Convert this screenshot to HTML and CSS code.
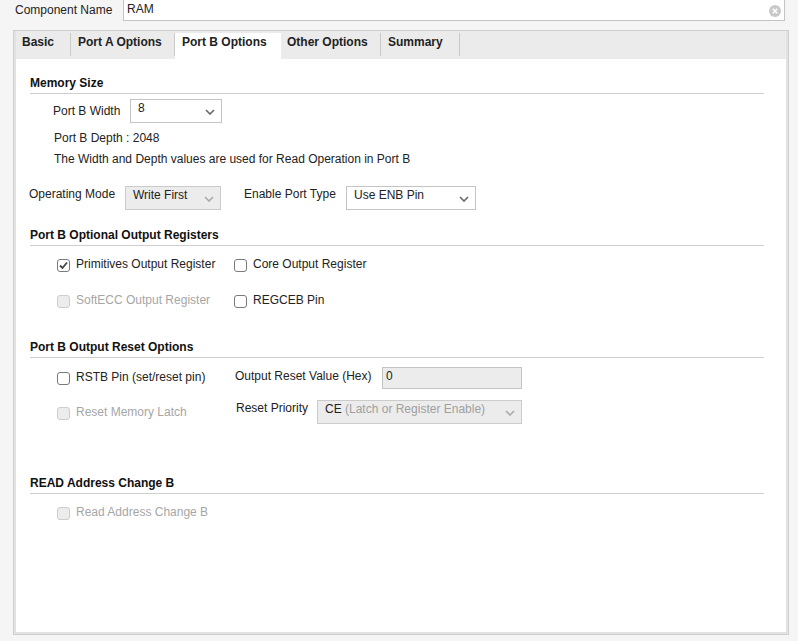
FILE: index.html
```html
<!DOCTYPE html>
<html>
<head>
<meta charset="utf-8">
<link rel="stylesheet" href="styles.css">
</head>
<body>
<div class="top">
  <span class="top-label">Component Name</span>
  <div class="name-input">
    <span>RAM</span>
    <svg class="clear" width="12" height="12" viewBox="0 0 12 12"><circle cx="6" cy="6" r="6" fill="#c9c9c9"/><path d="M3.8 3.8L8.2 8.2M8.2 3.8L3.8 8.2" stroke="#fff" stroke-width="1.6"/></svg>
  </div>
</div>
<div class="panel">
  <div class="tabs">
    <div class="tab t1">Basic</div>
    <div class="tab t2">Port A Options</div>
    <div class="tab t3 active">Port B Options</div>
    <div class="tab t4">Other Options</div>
    <div class="tab t5">Summary</div>
  </div>
  <div class="content">
    <div class="sec-title s1">Memory Size</div>
    <div class="row width-row">
      <span class="lbl">Port B Width</span>
      <div class="select w-width"><span>8</span><svg class="chev" width="10" height="6" viewBox="0 0 10 6"><path d="M1 1L5 5L9 1" fill="none" stroke="#666" stroke-width="1.6"/></svg></div>
    </div>
    <div class="txt depth">Port B Depth : 2048</div>
    <div class="txt desc">The Width and Depth values are used for Read Operation in Port B</div>
    <div class="row op-row">
      <span class="lbl">Operating Mode</span>
      <div class="select disabled w-mode"><span>Write First</span><svg class="chev" width="10" height="6" viewBox="0 0 10 6"><path d="M1 1L5 5L9 1" fill="none" stroke="#aaa" stroke-width="1.6"/></svg></div>
      <span class="lbl lbl-enable">Enable Port Type</span>
      <div class="select w-enable"><span>Use ENB Pin</span><svg class="chev" width="10" height="6" viewBox="0 0 10 6"><path d="M1 1L5 5L9 1" fill="none" stroke="#666" stroke-width="1.6"/></svg></div>
    </div>

    <div class="sec-title s2">Port B Optional Output Registers</div>
    <div class="cgrid g1">
      <label class="chk"><span class="box checked"><svg width="11" height="11" viewBox="0 0 11 11"><path d="M2 5.5L4.5 8L9 2.5" fill="none" stroke="#444" stroke-width="1.8"/></svg></span>Primitives Output Register</label>
      <label class="chk"><span class="box"></span>Core Output Register</label>
      <label class="chk dis r2"><span class="box"></span>SoftECC Output Register</label>
      <label class="chk r2"><span class="box"></span>REGCEB Pin</label>
    </div>

    <div class="sec-title s3">Port B Output Reset Options</div>
    <div class="reset">
      <div class="rrow rr1">
        <label class="chk c1"><span class="box"></span>RSTB Pin (set/reset pin)</label>
        <span class="lbl rv-lbl">Output Reset Value (Hex)</span>
        <div class="field">0</div>
      </div>
      <div class="rrow rr2">
        <label class="chk dis c1 lm"><span class="box"></span>Reset Memory Latch</label>
        <span class="lbl rp-lbl">Reset Priority</span>
        <div class="select disabled w-prio"><span>CE <em>(Latch or Register Enable)</em></span><svg class="chev" width="10" height="6" viewBox="0 0 10 6"><path d="M1 1L5 5L9 1" fill="none" stroke="#aaa" stroke-width="1.6"/></svg></div>
      </div>
    </div>

    <div class="sec-title s4">READ Address Change B</div>
    <label class="chk dis ra"><span class="box"></span>Read Address Change B</label>
  </div>
</div>
</body>
</html>
```
FILE: styles.css
```css
html, body {
  margin: 0;
  padding: 0;
  background: #f5f5f5;
  font-family: "Liberation Sans", Arial, sans-serif;
  font-size: 12px;
  color: #222;
  width: 798px;
  height: 641px;
  overflow: hidden;
}
.top {
  display: flex;
  align-items: center;
  height: 22px;
  padding-left: 15px;
  margin-top: -1px;
}
.top-label {
  width: 108px;
}
.name-input {
  width: 662px;
  height: 22px;
  box-sizing: border-box;
  border: 1px solid #c4c4c4;
  background: #fff;
  display: flex;
  align-items: center;
  justify-content: space-between;
  padding: 0 3px 0 3px;
}
.name-input span { margin-top: -3px; }
.clear { margin-top: 1px; }
.panel {
  margin: 9px 0 0 13px;
  width: 776px;
  height: 605px;
  box-sizing: border-box;
  border: 1px solid #cfcfcf;
  box-shadow: inset 2px 0 0 #e2e2e2, inset -2px 0 0 #e2e2e2, inset 0 -2px 0 #e2e2e2;
  background: #fff;
  display: flex;
  flex-direction: column;
}
.tabs {
  display: flex;
  height: 28px;
  background: #ebebeb;
  margin: 0 2px;
  align-items: flex-end;
  line-height: 14px;
}
.tab {
  font-weight: bold;
  box-sizing: border-box;
}
.t1 { width: 55px; padding-left: 6px; }
.t2 { width: 104px; padding-left: 7px; }
.t3 { width: 106px; padding-left: 7px; background: #fff; height: 26px; padding-top: 2px; }
.t4 { width: 100px; padding-left: 6px; }
.t5 { width: 79px; padding-left: 7px; }
.t1, .t2, .t4, .t5 { border-right: 1px solid #c9c9c9; height: 23px; margin-bottom: 3px; padding-top: 2px; }
.content {
  flex: 1;
  padding: 16px 22px 0 14px;
  margin: 0 2px 2px;
  background: #fff;
  line-height: 14px;
}
.sec-title {
  font-weight: bold;
  color: #111;
  padding-top: 1px;
  padding-bottom: 3px;
  border-bottom: 1px solid #cfcfcf;
}
.row {
  display: flex;
  align-items: flex-start;
}
.lbl { display: inline-block; }
.width-row {
  margin-top: 5px;
  padding-left: 23px;
}
.width-row .lbl { width: 77px; padding-top: 5px; }
.select {
  height: 24px;
  box-sizing: border-box;
  border: 1px solid #c4c4c4;
  background: #fff;
  display: flex;
  justify-content: space-between;
  align-items: flex-start;
  padding: 1px 6px 0 7px;
  color: #222;
}
.select .chev { margin-top: 8px; }
.w-width { width: 92px; }
.txt { margin-top: 7px; padding-left: 24px; }
.depth { padding-top: 1px; margin-top: 7px; }
.desc { margin-top: 6px; padding-top: 1px; }
.op-row { margin-top: 20px; }
.op-row .lbl { padding-top: 1px; }
.op-row .lbl:first-child { width: 96px; margin-left: -1px; }
.op-row .select { height: 24px; }
.disabled { background: #ececec; border-color: #cbcbcb; }
.w-mode { width: 96px; }
.lbl-enable { margin-left: 23px; width: 102px; }
.w-enable { width: 130px; }
.s2 { margin-top: 17px; }
.cgrid {
  display: grid;
  grid-template-columns: 177px auto;
  padding-left: 27px;
  margin-top: 11px;
  row-gap: 22px;
}
.chk {
  display: flex;
  align-items: center;
  height: 14px;
  color: #222;
}
.box {
  width: 13px;
  height: 13px;
  box-sizing: border-box;
  border: 1px solid #7a7a7a;
  border-radius: 3px;
  background: #fff;
  margin-right: 6px;
  display: flex;
  align-items: center;
  justify-content: center;
  margin-top: 3px;
}
.box svg { display: block; }
.chk.dis { color: #a6a6a6; }
.chk.dis .box { border-color: #cdcdcd; background: #ececec; }
.s3 { margin-top: 32px; }
.reset { padding-left: 27px; }
.rrow { display: flex; align-items: center; }
.rr1 { margin-top: 9px; height: 22px; }
.rr1 .chk { margin-top: -2px; }
.rr1 .lbl { margin-top: -4px; }
.rr2 { margin-top: 11px; height: 24px; align-items: flex-start; }
.c1 { width: 178px; }
.rv-lbl { width: 147px; }
.field {
  width: 140px;
  height: 22px;
  box-sizing: border-box;
  border: 1px solid #c4c4c4;
  background: #ececec;
  padding: 1px 0 0 3px;
}
.lm { margin-top: 5px; }
.rp-lbl { width: 81px; margin-left: 1px; padding-top: 1px; }
.w-prio { width: 205px; }
.w-prio em { font-style: normal; color: #a0a0a0; }
.s4 { margin-top: 51px; }
.ra { margin-top: 11px; margin-left: 27px; }
```
